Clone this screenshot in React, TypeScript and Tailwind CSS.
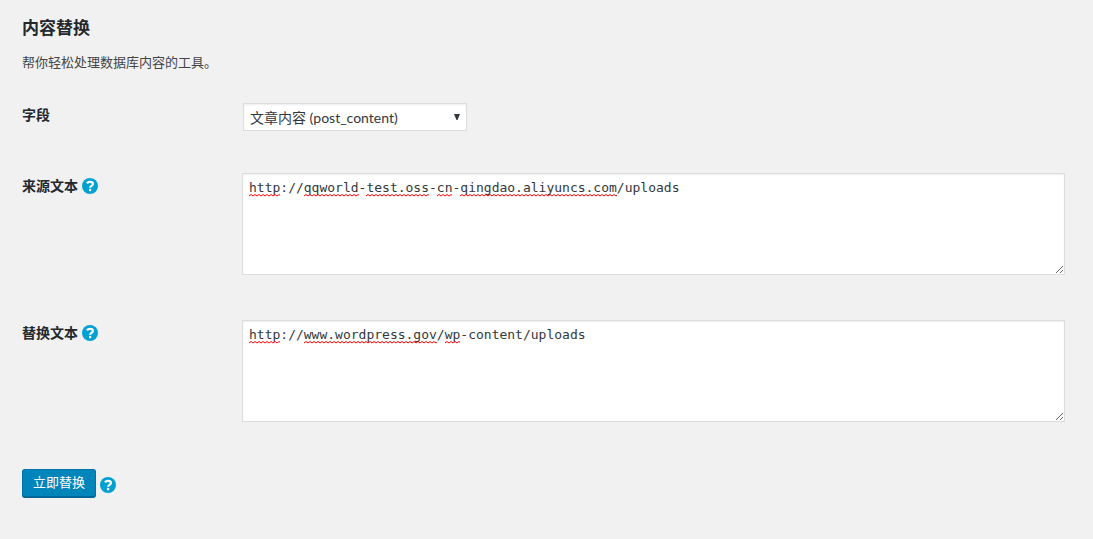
import { useState } from "react";
import type { ReactNode } from "react";

type Range = [start: number, end: number];

const WAVE =
  "bg-[url('data:image/svg+xml,%3Csvg%20xmlns=%22http://www.w3.org/2000/svg%22%20width=%224%22%20height=%223%22%3E%3Cpath%20d=%22M0%202L2%20.5L4%202%22%20fill=%22none%22%20stroke=%22red%22/%3E%3C/svg%3E')]";

function HelpIcon() {
  return (
    <a href="#help" aria-label="帮助" className="block shrink-0 text-[#00a0d2]">
      <svg viewBox="0 0 16 16" className="size-4" aria-hidden="true">
        <circle cx="8" cy="8" r="8" fill="currentColor" />
        <path
          d="M4.9 5.3C5.7 4.3 6.7 3.8 8 3.8c1.8 0 2.9.8 2.9 2.1 0 1.9-2.8 1.9-2.8 3.9"
          fill="none"
          stroke="white"
          strokeWidth="2.2"
        />
        <circle cx="8.1" cy="12.1" r="1.3" fill="white" />
      </svg>
    </a>
  );
}

function Row({ id, label, help, children }: { id: string; label: string; help?: boolean; children: ReactNode }) {
  return (
    <div className="flex items-start">
      <div className={`flex w-[220px] shrink-0 items-center gap-1 ${help ? "pt-[3px]" : "pt-0.5"}`}>
        <label htmlFor={id} className="text-sm font-bold text-[#23282d]">
          {label}
        </label>
        {help && <HelpIcon />}
      </div>
      <div className="min-w-0 flex-1">{children}</div>
    </div>
  );
}

function TextBox({ id, initial, marks }: { id: string; initial: string; marks: Range[] }) {
  const [value, setValue] = useState(initial);
  return (
    <div className="relative font-['DejaVu_Sans_Mono','Noto_Sans_CJK_SC',monospace] text-[13px] leading-5">
      <textarea
        id={id}
        spellCheck={false}
        value={value}
        onChange={(e) => setValue(e.target.value)}
        className="block h-[102px] w-full resize border border-[#ddd] bg-white px-1.5 py-1 text-[#32373c] shadow-[inset_0_1px_2px_rgba(0,0,0,0.07)] outline-none focus:border-[#5b9dd9]"
      />
      {value === initial &&
        marks.map(([start, end]) => (
          <span
            key={start}
            aria-hidden="true"
            className={`pointer-events-none absolute top-[21px] ml-[7px] h-[3px] bg-repeat-x ${WAVE}`}
            style={{ left: `${start}ch`, width: `${end - start}ch` }}
          />
        ))}
    </div>
  );
}

export default function App() {
  return (
    <main className="min-h-screen bg-[#f1f1f1] pt-4 pr-7 pb-10 pl-[22px] font-['Open_Sans','Noto_Sans_CJK_SC',sans-serif] text-[#444]">
      <h1 className="text-[17px] leading-6 font-bold text-[#23282d]">内容替换</h1>
      <p className="mt-3 text-[13px] leading-5">帮你轻松处理数据库内容的工具。</p>

      <form onSubmit={(e) => e.preventDefault()} className="mt-[31px]">
        <div className="flex flex-col gap-[45px]">
          <Row id="field" label="字段">
            <div className="relative ml-px mb-[-3px] w-56">
              <select
                id="field"
                className="block h-7 w-full appearance-none border border-[#ddd] bg-white pt-0.5 pr-6 pl-1.5 font-['Lato','Noto_Sans_CJK_SC',sans-serif] text-sm text-[#32373c] shadow-[inset_0_1px_2px_rgba(0,0,0,0.07)] outline-none focus:border-[#5b9dd9]"
              >
                <option>文章内容 (post_content)</option>
              </select>
              <svg
                viewBox="0 0 6 6"
                className="pointer-events-none absolute top-[11px] right-[7px] size-1.5"
                fill="#32373c"
                aria-hidden="true"
              >
                <path d="M0 0h6L3.5 6h-1z" />
              </svg>
            </div>
          </Row>
          <Row id="source" label="来源文本" help>
            <TextBox
              id="source"
              initial="http://qqworld-test.oss-cn-qingdao.aliyuncs.com/uploads"
              marks={[[0, 4], [7, 14], [15, 23], [24, 26], [27, 47]]}
            />
          </Row>
          <Row id="target" label="替换文本" help>
            <TextBox
              id="target"
              initial="http://www.wordpress.gov/wp-content/uploads"
              marks={[[0, 4], [7, 24], [25, 27]]}
            />
          </Row>
        </div>
        <div className="mt-[47px] flex items-center gap-1">
          <button
            type="submit"
            className="h-7 rounded-[3px] border border-[#0073aa] border-b-[#006799] bg-[#0085ba] px-2.5 text-[13px] text-white shadow-[0_1px_0_#006799] hover:bg-[#008ec2]"
          >
            立即替换
          </button>
          <div className="pt-1">
            <HelpIcon />
          </div>
        </div>
      </form>
    </main>
  );
}
